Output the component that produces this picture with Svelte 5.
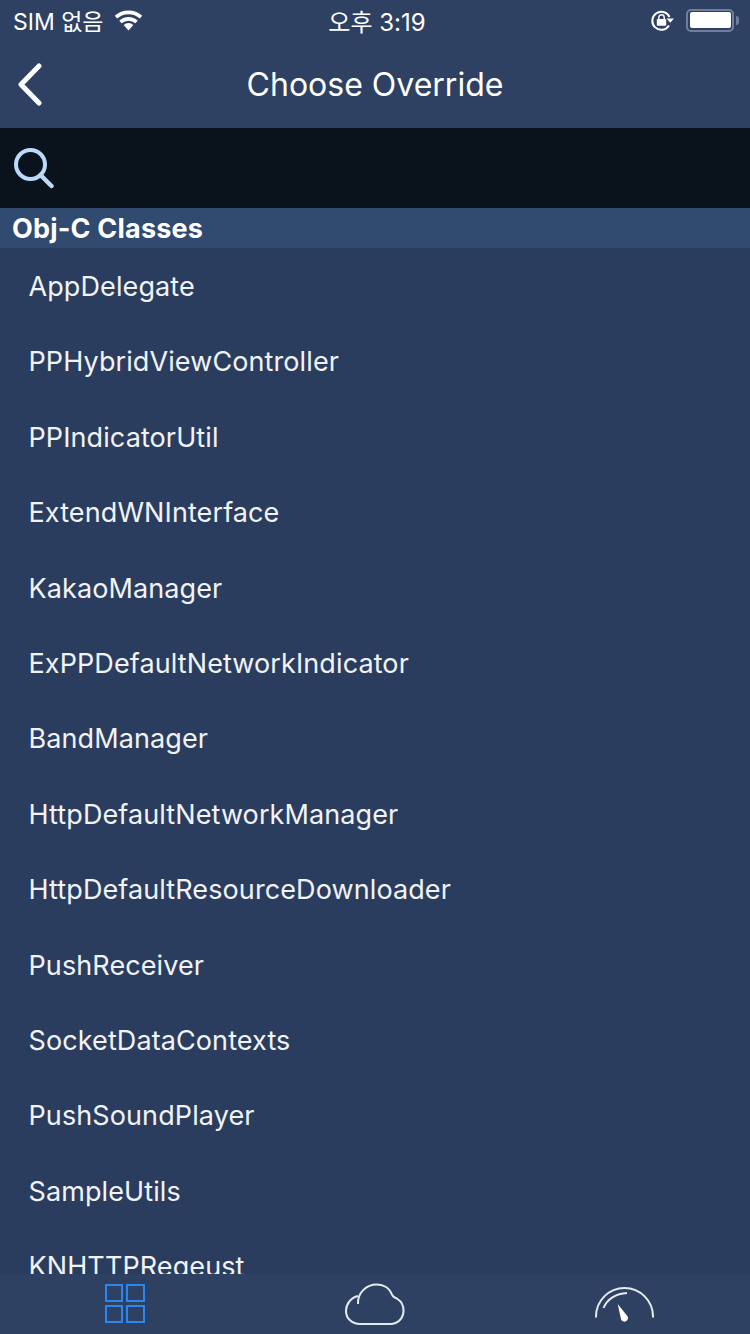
<script lang="ts">
  const classes = [
    "AppDelegate",
    "PPHybridViewController",
    "PPIndicatorUtil",
    "ExtendWNInterface",
    "KakaoManager",
    "ExPPDefaultNetworkIndicator",
    "BandManager",
    "HttpDefaultNetworkManager",
    "HttpDefaultResourceDownloader",
    "PushReceiver",
    "SocketDataContexts",
    "PushSoundPlayer",
    "SampleUtils",
    "KNHTTPRegeust",
  ];
</script>

<div class="screen">
  <header class="top">
    <div class="status">
      <div class="status-left">
        <span>SIM 없음</span>
        <svg class="wifi" viewBox="0 0 30 22" width="30" height="22">
          <path d="M2 8.2a18.5 18.5 0 0 1 25 0" fill="none" stroke="#fff" stroke-width="3.6" />
          <path d="M6.5 13a11.8 11.8 0 0 1 16 0" fill="none" stroke="#fff" stroke-width="3.6" />
          <path d="M14.500 21.500l-4.800-5.400a6.800 6.800 0 0 1 9.600 0z" fill="#fff" />
        </svg>
      </div>
      <span class="time">오후 3:19</span>
      <div class="status-right">
        <svg class="lock" viewBox="0 0 24 22" width="24" height="22">
          <path d="M18 16.500A9 9 0 1 1 18.500 8" fill="none" stroke="#fff" stroke-width="2" />
          <path d="M15.500 9.500H23L19.200 13.800z" fill="#fff" />
          <rect x="5.800" y="10" width="9.400" height="6.800" rx="1" fill="#fff" />
          <path d="M7.800 10.500V8.500a2.700 2.700 0 0 1 5.400 0v2" fill="none" stroke="#fff" stroke-width="1.400" />
        </svg>
        <div class="battery"><div class="charge"></div></div>
        <div class="nub"></div>
      </div>
    </div>
    <div class="nav">
      <svg class="back" viewBox="0 0 28 44" width="28" height="44">
        <path d="M23 4 5 22.500 23 41" fill="none" stroke="#fff" stroke-width="5" stroke-linecap="round" stroke-linejoin="round" />
      </svg>
      <span>Choose Override</span>
    </div>
  </header>

  <div class="search">
    <svg viewBox="0 0 42 42" width="42" height="42">
      <circle cx="17.500" cy="17.500" r="14.500" fill="none" stroke="#bcd9fb" stroke-width="4" />
      <path d="M27.500 28 38.500 39" stroke="#bcd9fb" stroke-width="4.500" stroke-linecap="round" />
    </svg>
  </div>

  <div class="section">Obj-C Classes</div>

  <ul class="list">
    {#each classes as name}
      <li>{name}</li>
    {/each}
  </ul>

  <nav class="tabs">
    <svg class="tab-grid" viewBox="0 0 40 40" width="40" height="40">
      <g fill="none" stroke="#2f86ea" stroke-width="2">
        <rect x="1" y="1" width="16" height="16" />
        <rect x="22" y="1" width="17" height="16" />
        <rect x="1" y="22" width="16" height="16" />
        <rect x="22" y="22" width="17" height="16" />
      </g>
    </svg>
    <svg class="tab-cloud" viewBox="0 0 62 42" width="62" height="42">
      <path d="M14 21C13.500 10 22 1.500 33 1.500c7 0 13 4 15.500 11 1 2 3 2 5 3.500 4 2.500 6 7 6 11.500 0 8-6 13.500-13 13.500H16C8 41 2 35.500 2 28c0-7 5-13.500 12-15" fill="none" stroke="#e6ebf2" stroke-width="2" />
    </svg>
    <svg class="tab-gauge" viewBox="0 0 60 36" width="60" height="36">
      <path d="M1 30.500V29.500a28.500 28.500 0 0 1 57 0v1" fill="none" stroke="#e6ebf2" stroke-width="2" />
      <path d="M8.500 21C12 12 21 6.500 32 6" fill="none" stroke="#e6ebf2" stroke-width="2" />
      <path d="M22.700 17 32.500 29.200a3.600 3.600 0 1 1-6.500 3z" fill="#fff" />
    </svg>
  </nav>
</div>

<style>
  :global(body) {
    margin: 0;
    background: #2b3d5e;
  }

  .screen {
    width: 750px;
    height: 1334px;
    display: flex;
    flex-direction: column;
    background: #2b3d5e;
    color: #fff;
    font-family: Inter, "Noto Sans CJK KR", sans-serif;
    overflow: hidden;
  }

  .top {
    background: #2e4163;
  }

  .status {
    height: 40px;
    padding: 0 11px 0 13px;
    display: grid;
    grid-template-columns: 1fr auto 1fr;
    align-items: center;
    font-size: 23px;
  }

  .status-left {
    display: flex;
    align-items: center;
    gap: 10px;
  }

  .time {
    font-size: 24px;
    margin-left: 2px;
  }

  .status-right {
    display: flex;
    align-items: center;
    justify-content: flex-end;
  }

  .lock {
    margin-right: 11px;
  }

  .battery {
    width: 41px;
    height: 16px;
    padding: 1.5px;
    border: 2px solid #6f7f9b;
    border-radius: 5px;
  }

  .charge {
    width: 100%;
    height: 100%;
    background: #fff;
    border-radius: 2px;
  }

  .nub {
    width: 3px;
    height: 9px;
    margin-left: 2px;
    background: #6f7f9b;
    border-radius: 0 3px 3px 0;
  }

  .nav {
    height: 88px;
    position: relative;
    display: flex;
    align-items: center;
    justify-content: center;
    font-size: 32px;
  }

  .back {
    position: absolute;
    left: 16px;
    top: 22px;
  }

  .search {
    height: 80px;
    background: #0a121b;
    display: flex;
    align-items: center;
    padding-left: 13px;
  }

  .section {
    height: 40px;
    line-height: 41px;
    padding-left: 12px;
    background: #304a70;
    font-size: 27px;
    font-weight: 700;
    letter-spacing: 0.2px;
  }

  .list {
    flex: 1;
    min-height: 0;
    margin: 0;
    padding: 0;
    list-style: none;
    overflow: hidden;
  }

  .list li {
    height: 75.4px;
    line-height: 77px;
    padding-left: 28.5px;
    font-size: 27px;
    letter-spacing: 0.1px;
    color: #f1f3f6;
  }

  .tabs {
    height: 60px;
    background: #2e4163;
    display: grid;
    grid-template-columns: repeat(3, 1fr);
    justify-items: center;
    flex-shrink: 0;
  }

  .tab-grid {
    margin-top: 10px;
  }

  .tab-cloud {
    margin-top: 9px;
  }

  .tab-gauge {
    margin-top: 13px;
  }
</style>
